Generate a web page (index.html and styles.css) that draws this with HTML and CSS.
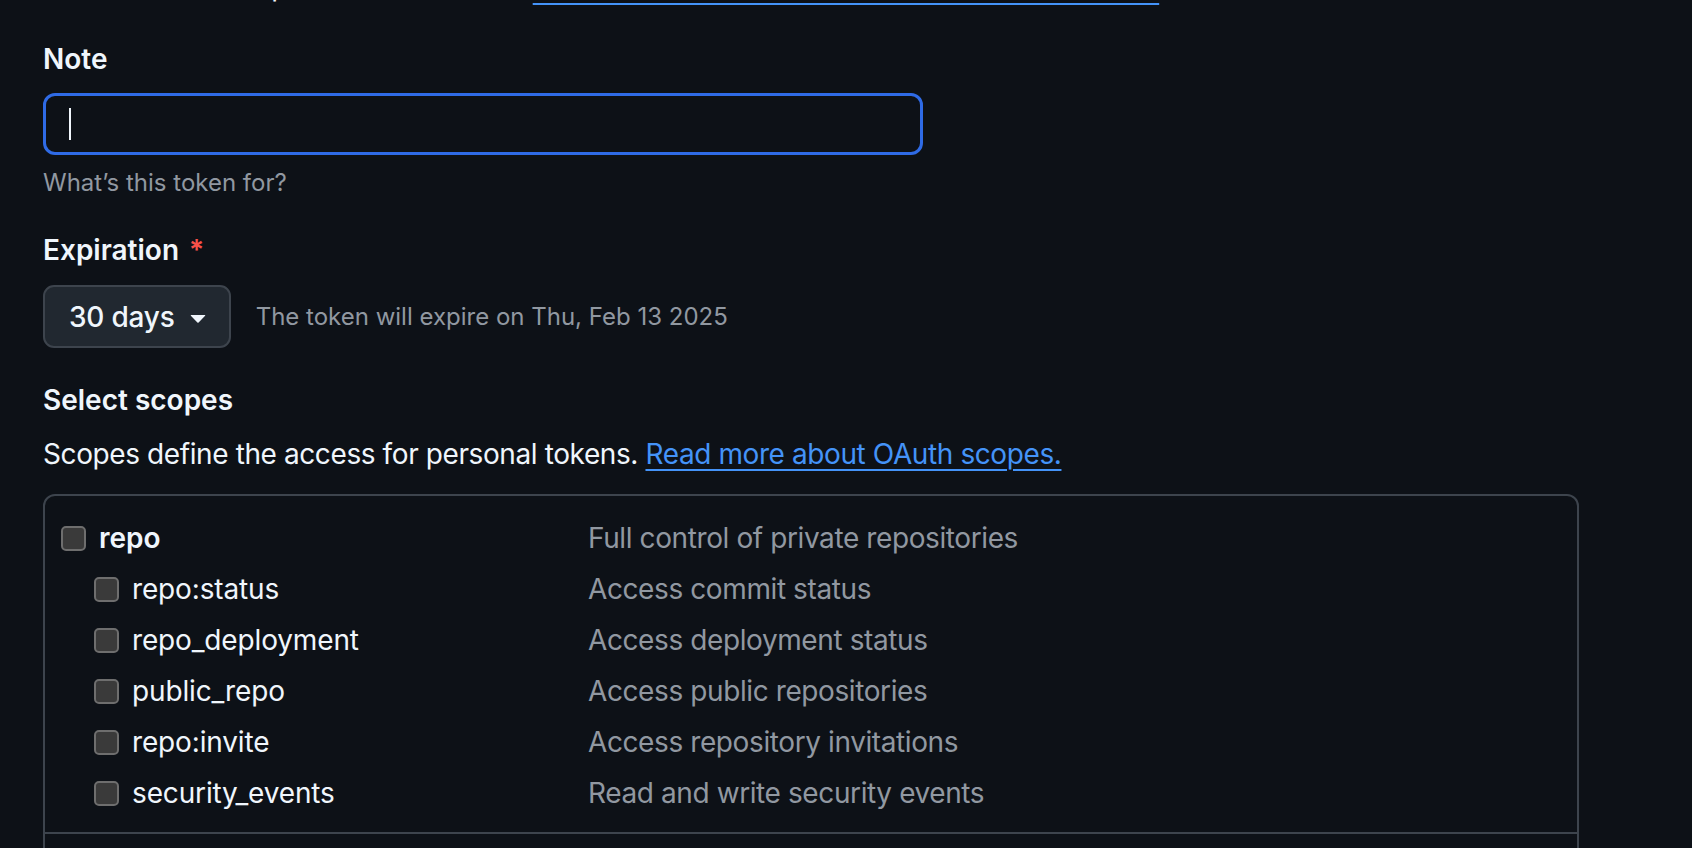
FILE: index.html
```html
<!DOCTYPE html>
<html lang="en">
<head>
  <meta charset="UTF-8" />
  <title>New personal access token (classic)</title>
  <meta name="viewport" content="width=device-width, initial-scale=1.0" />
  <link rel="stylesheet" href="styles.css">
</head>
<body>

  <main class="page">
    <!-- intro line, scrolled mostly out of view -->
    <p class="intro">Use tokens in scripts and automation. <a href="#">Learn more about authentication to the REST API</a></p>

    <div class="form-group">
      <label class="form-label" for="note">Note</label>
      <div class="text-input is-focused" id="note">
        <span class="caret"></span>
      </div>
      <p class="note-hint">What’s this token for?</p>
    </div>

    <div class="form-group expiration">
      <label class="form-label">Expiration <span class="required">*</span></label>
      <div class="expiration-row">
        <button class="select-btn" type="button">
          30 days
          <svg class="caret-down" viewBox="0 0 16 16" width="32" height="32" aria-hidden="true">
            <path d="m4.427 7.427 3.396 3.396a.25.25 0 0 0 .354 0l3.396-3.396A.25.25 0 0 0 11.396 7H4.604a.25.25 0 0 0-.177.427Z"></path>
          </svg>
        </button>
        <span class="expire-text">The token will expire on Thu, Feb 13 2025</span>
      </div>
    </div>

    <h3 class="section-title">Select scopes</h3>
    <p class="section-desc">Scopes define the access for personal tokens. <a href="#">Read more about OAuth scopes.</a></p>

    <div class="scopes">
      <div class="scope-group">
        <div class="scope-row parent">
          <label class="scope-name"><input type="checkbox"> repo</label>
          <span class="scope-desc">Full control of private repositories</span>
        </div>
        <div class="scope-row child">
          <label class="scope-name"><input type="checkbox"> repo:status</label>
          <span class="scope-desc">Access commit status</span>
        </div>
        <div class="scope-row child">
          <label class="scope-name"><input type="checkbox"> repo_deployment</label>
          <span class="scope-desc">Access deployment status</span>
        </div>
        <div class="scope-row child">
          <label class="scope-name"><input type="checkbox"> public_repo</label>
          <span class="scope-desc">Access public repositories</span>
        </div>
        <div class="scope-row child">
          <label class="scope-name"><input type="checkbox"> repo:invite</label>
          <span class="scope-desc">Access repository invitations</span>
        </div>
        <div class="scope-row child">
          <label class="scope-name"><input type="checkbox"> security_events</label>
          <span class="scope-desc">Read and write security events</span>
        </div>
      </div>
      <div class="scope-group">
        <div class="scope-row parent">
          <label class="scope-name"><input type="checkbox"> workflow</label>
          <span class="scope-desc">Update GitHub Action workflows</span>
        </div>
      </div>
    </div>
  </main>

</body>
</html>
```

FILE: styles.css
```css
/* Reset & base */
* {
  box-sizing: border-box;
}
html, body {
  margin: 0;
  padding: 0;
  height: 100%;
  overflow: hidden;
  background: #0d1117;
  color: #f0f6fc;
  font-family: Inter, "Noto Sans", "Liberation Sans", sans-serif;
  font-size: 28px;
  line-height: 42px;
}

a {
  color: #4493f8;
  text-decoration: underline;
  text-decoration-thickness: 2px;
  text-underline-offset: 5px;
}

.page {
  padding: 0 0 0 43px;
  width: 1579px;
}

/* Intro text (cut off by the top of the window) */
.intro {
  margin: -35px 0 0;
  letter-spacing: -0.4px;
}
.intro a {
  text-underline-offset: 7px;
}

/* Form groups */
.form-group {
  margin-top: 31px;
}
.form-group.expiration {
  margin-top: 28px;
}
.form-label {
  display: block;
  font-weight: 600;
  margin-bottom: 13px;
}
.required {
  color: #f85149;
  margin-left: 3px;
}

.text-input {
  width: 880px;
  height: 62px;
  border: 2px solid #3d444d;
  border-radius: 12px;
  background: #0d1117;
  display: flex;
  align-items: center;
  padding-left: 23px;
}
.text-input.is-focused {
  border: 3px solid #2f6be6;
}
.caret {
  width: 2px;
  height: 32px;
  background: #f0f6fc;
}

.note-hint {
  margin: 10px 0 0;
  font-size: 24px;
  line-height: 36px;
  color: #9198a1;
}

/* Expiration */
.expiration .form-label {
  margin-bottom: 14px;
}
.expiration-row {
  display: flex;
  align-items: center;
  gap: 25px;
}
.select-btn {
  display: flex;
  align-items: center;
  gap: 7px;
  height: 63px;
  padding: 0 15px 0 24px;
  background: #212830;
  border: 2px solid #3d444d;
  border-radius: 11px;
  color: #f0f6fc;
  font: inherit;
  font-weight: 500;
  letter-spacing: -0.2px;
  cursor: pointer;
}
.caret-down {
  fill: #f0f6fc;
}
.expire-text {
  font-size: 24px;
  color: #9198a1;
}

/* Scopes */
.section-title {
  margin: 31px 0 0;
  font-size: 28px;
  font-weight: 600;
}
.section-desc {
  margin: 12px 0 0;
  letter-spacing: -0.4px;
}

.scopes {
  margin-top: 19px;
  border: 2px solid #3d444d;
  border-radius: 12px;
}
.scope-group {
  padding: 16px 16px 14px;
  border-bottom: 2px solid #3d444d;
}
.scope-row {
  display: grid;
  grid-template-columns: 527px 1fr;
  align-items: center;
  height: 51px;
}
.scope-row.child .scope-name {
  padding-left: 33px;
}
.scope-name {
  display: flex;
  align-items: center;
  gap: 13px;
  letter-spacing: -0.15px;
}
.parent .scope-name {
  font-weight: 600;
  letter-spacing: 0;
}
.scope-desc {
  color: #9198a1;
  letter-spacing: -0.4px;
}

input[type="checkbox"] {
  appearance: none;
  -webkit-appearance: none;
  margin: 2px 0 0;
  width: 25px;
  height: 25px;
  background: #3a3a3a;
  border: 2px solid #6e6e6e;
  border-radius: 5px;
}
```
